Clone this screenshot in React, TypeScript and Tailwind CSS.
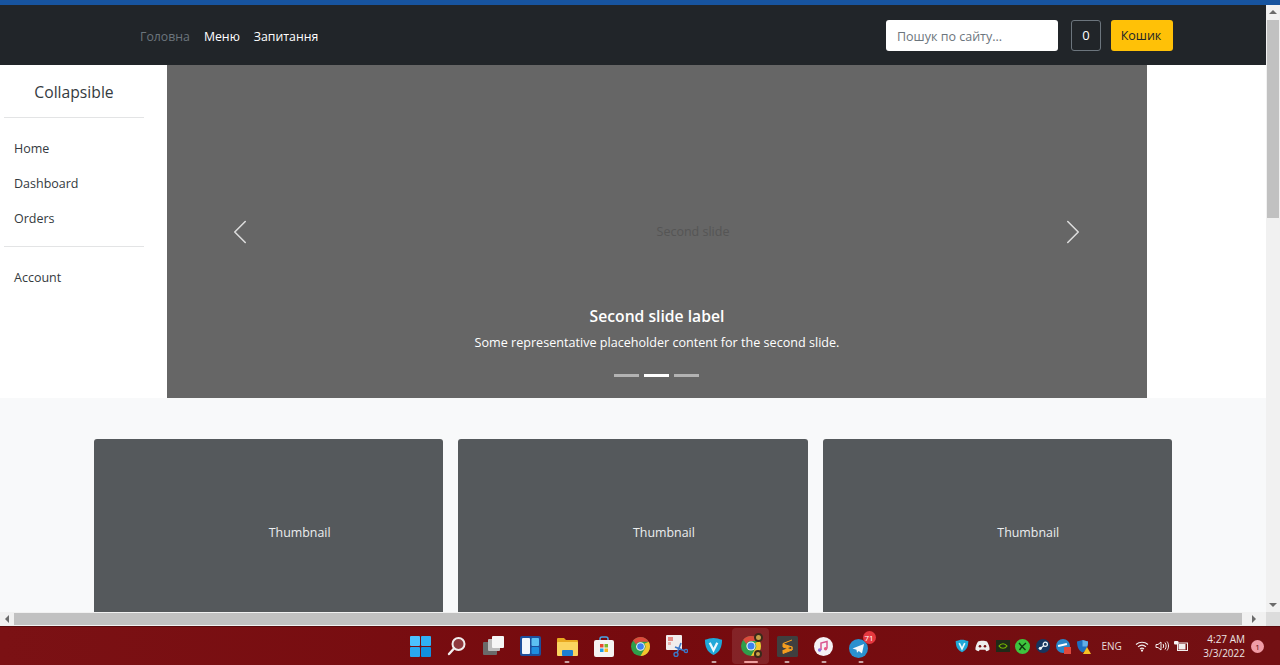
import { ChevronLeft, ChevronRight } from 'lucide-react'
import type { ReactNode } from 'react'

const font = "font-['Open_Sans','Noto_Sans',sans-serif]"

function Arrow({ dir }: { dir: 'up' | 'down' | 'left' | 'right' }) {
  const pts = { up: '0,5 4,1 8,5', down: '0,2 8,2 4,6', left: '6,0 6,8 2,4', right: '2,0 2,8 6,4' }[dir]
  return (
    <svg width="8" height="8" viewBox="0 0 8 8">
      <polygon points={pts} fill="#6b6b6b" />
    </svg>
  )
}

function Slot({ children, active, dot }: { children: ReactNode; active?: boolean; dot?: boolean }) {
  return (
    <div className={`relative w-[36.7px] h-[36px] flex items-center justify-center rounded ${active ? 'bg-white/10' : ''}`}>
      {children}
      {dot && <span className={`absolute bottom-[1px] left-1/2 -translate-x-1/2 h-[2px] rounded-full ${active ? 'w-[14px] bg-[#f0a0a0]' : 'w-[5px] bg-[#c9a5a5]'}`} />}
    </div>
  )
}

function WindowsIcon() {
  return (
    <svg width="21" height="21" viewBox="0 0 21 21">
      <rect x="0" y="0" width="10" height="10" rx="1" fill="#4cc2ff" />
      <rect x="11" y="0" width="10" height="10" rx="1" fill="#2fb0f5" />
      <rect x="0" y="11" width="10" height="10" rx="1" fill="#2aa8f0" />
      <rect x="11" y="11" width="10" height="10" rx="1" fill="#1190e0" />
    </svg>
  )
}

function SearchIcon() {
  return (
    <svg width="20" height="20" viewBox="0 0 20 20">
      <circle cx="11.5" cy="8" r="6" fill="#8f3a3f" stroke="#f2eeee" strokeWidth="2" />
      <line x1="7" y1="12.5" x2="2" y2="18" stroke="#f2eeee" strokeWidth="2.4" strokeLinecap="round" />
    </svg>
  )
}

function TaskViewIcon() {
  return (
    <svg width="21" height="20" viewBox="0 0 21 20">
      <rect x="0" y="6" width="14" height="13" rx="1" fill="#6a6a6a" />
      <rect x="5" y="3" width="12" height="12" rx="1" fill="#bdbdbd" />
      <rect x="9" y="0" width="12" height="12" rx="1" fill="#f6f6f6" />
    </svg>
  )
}

function WidgetsIcon() {
  return (
    <svg width="21" height="20" viewBox="0 0 21 20">
      <rect x="0" y="0" width="21" height="20" rx="2" fill="#1d4f9c" />
      <rect x="2" y="2" width="8" height="16" rx="1" fill="#f2f6fb" />
      <rect x="11.5" y="2" width="7.5" height="8" rx="1" fill="#5cc0f2" />
      <rect x="11.5" y="11" width="7.5" height="7" rx="1" fill="#1f8fe0" />
    </svg>
  )
}

function FolderIcon() {
  return (
    <svg width="21" height="19" viewBox="0 0 21 19">
      <path d="M0 2a1 1 0 0 1 1-1h6l2 2h11a1 1 0 0 1 1 1v3H0z" fill="#e9a920" />
      <rect x="0" y="5" width="21" height="14" rx="1" fill="#fbd45f" />
      <rect x="5" y="13" width="11" height="6" rx="1" fill="#1d7fd1" />
    </svg>
  )
}

function StoreIcon() {
  return (
    <svg width="20" height="21" viewBox="0 0 20 21">
      <path d="M6 5V3a2 2 0 0 1 2-2h4a2 2 0 0 1 2 2v2" fill="none" stroke="#4aa6e8" strokeWidth="1.5" />
      <rect x="0" y="4" width="20" height="17" rx="2" fill="#f5f3f2" />
      <rect x="6" y="8" width="3.5" height="3.5" fill="#e8492f" />
      <rect x="10.5" y="8" width="3.5" height="3.5" fill="#7cb82a" />
      <rect x="6" y="12.5" width="3.5" height="3.5" fill="#1ea1e8" />
      <rect x="10.5" y="12.5" width="3.5" height="3.5" fill="#f8b81c" />
    </svg>
  )
}

function ChromeIcon({ size = 19 }: { size?: number }) {
  return (
    <svg width={size} height={size} viewBox="0 0 20 20">
      <circle cx="10" cy="10" r="10" fill="#2f9e4a" />
      <path d="M10 0a10 10 0 0 1 8.66 5H10a5 5 0 0 0-4.6 3L2.2 3.7A10 10 0 0 1 10 0z" fill="#dd4a3c" />
      <path d="M18.66 5A10 10 0 0 1 10 20l3.8-6.5A5 5 0 0 0 14 7z" fill="#f6c52c" />
      <circle cx="10" cy="10" r="4.6" fill="#f4f4f4" />
      <circle cx="10" cy="10" r="3.5" fill="#3d82ee" />
    </svg>
  )
}

function SnipIcon() {
  return (
    <svg width="22" height="22" viewBox="0 0 22 22">
      <rect x="0" y="0" width="16" height="15" rx="1" fill="#f1ecec" />
      <rect x="2" y="2" width="5" height="4" fill="#e58a84" />
      <rect x="2" y="7" width="3" height="3" fill="#e9b0ac" />
      <line x1="9" y1="12" x2="19" y2="16" stroke="#3b78c9" strokeWidth="1.6" />
      <line x1="15" y1="8" x2="11" y2="18" stroke="#3b78c9" strokeWidth="1.6" />
      <circle cx="10" cy="19.5" r="2" fill="none" stroke="#3b78c9" strokeWidth="1.4" />
      <circle cx="20" cy="16" r="1.6" fill="none" stroke="#3b78c9" strokeWidth="1.4" />
    </svg>
  )
}

function VpnShield({ size = 19 }: { size?: number }) {
  return (
    <svg width={size} height={size} viewBox="0 0 20 20">
      <path d="M1 3c3-1 6-2 9-2s6 1 9 2c0 7-2 13-9 16C3 16 1 10 1 3z" fill="#1fa8d8" />
      <path d="M6 6l4 8 4-8" fill="none" stroke="#e8f8fd" strokeWidth="2.4" />
    </svg>
  )
}

function PumpkinChrome() {
  return (
    <div className="relative w-[24px] h-[24px] flex items-center justify-center">
      <ChromeIcon size={20} />
      <span className="absolute top-[-1px] right-[0px] w-[9px] h-[9px] rounded-full bg-[#c7a24a] border-2 border-[#3a2a1a]" />
      <span className="absolute bottom-[0px] right-[1px] w-[8px] h-[8px] rounded-full bg-[#c7a24a] border-2 border-[#3a2a1a]" />
    </div>
  )
}

function SublimeIcon() {
  return (
    <svg width="21" height="21" viewBox="0 0 21 21">
      <rect width="21" height="21" rx="1.5" fill="#3f3f3f" />
      <path d="M15 4L6 7.5v3.5l9 3v-3L6 8M15 10.5v3.5L6 17.5v-3.5" fill="#f59d1f" stroke="#f59d1f" strokeWidth="1" />
    </svg>
  )
}

function MusicIcon() {
  return (
    <svg width="19" height="19" viewBox="0 0 19 19">
      <circle cx="9.5" cy="9.5" r="9.5" fill="#f5f2f5" />
      <path d="M7 13V6l6-1.5V11.5" fill="none" stroke="#d9568f" strokeWidth="1.5" />
      <circle cx="5.6" cy="13" r="1.7" fill="#8f6fe0" />
      <circle cx="11.6" cy="11.8" r="1.7" fill="#e85a85" />
    </svg>
  )
}

function TelegramIcon() {
  return (
    <div className="relative w-[24px] h-[24px] flex items-end justify-start">
      <svg width="19" height="19" viewBox="0 0 19 19">
        <circle cx="9.5" cy="9.5" r="9.5" fill="#2a90cf" />
        <path d="M3.5 9.5L15 5l-2 9.5-3.3-2.4-1.7 1.7-.5-3z" fill="#f1f8fc" />
      </svg>
      <span className={`absolute top-[-3px] right-[-3px] w-[13px] h-[13px] rounded-full bg-[#e5383f] text-white text-[8px] leading-[13px] text-center ${font}`}>71</span>
    </div>
  )
}

function Tray({ children }: { children: ReactNode }) {
  return <div className="w-[20.2px] h-[20px] flex items-center justify-center">{children}</div>
}

function Taskbar() {
  return (
    <footer className={`h-[39px] shrink-0 flex items-center border-t border-[#5a0a0d] bg-gradient-to-r from-[#7b1114] via-[#760a0e] to-[#731013] ${font}`}>
      <div className="flex items-center ml-[402px]">
        <Slot><WindowsIcon /></Slot>
        <Slot><SearchIcon /></Slot>
        <Slot><TaskViewIcon /></Slot>
        <Slot><WidgetsIcon /></Slot>
        <Slot dot><FolderIcon /></Slot>
        <Slot><StoreIcon /></Slot>
        <Slot><ChromeIcon /></Slot>
        <Slot><SnipIcon /></Slot>
        <Slot dot><VpnShield /></Slot>
        <Slot active dot><PumpkinChrome /></Slot>
        <Slot dot><SublimeIcon /></Slot>
        <Slot dot><MusicIcon /></Slot>
        <Slot dot><TelegramIcon /></Slot>
      </div>
      <div className="ml-auto flex items-center mr-[16px]">
        <Tray><VpnShield size={14} /></Tray>
        <Tray>
          <svg width="15" height="12" viewBox="0 0 15 12">
            <path d="M3 1.5C5 .6 10 .6 12 1.5c1.6 2.4 2.6 5.4 2.6 8-1 1-2.4 1.6-3.4 1.8l-.9-1.5H4.7l-.9 1.5C2.800 11.100 1.400 10.500.4 9.500c0-2.600 1-5.600 2.600-8z" fill="#eeeeee" />
            <circle cx="5" cy="6.200" r="1.300" fill="#7a1013" />
            <circle cx="10" cy="6.200" r="1.300" fill="#7a1013" />
          </svg>
        </Tray>
        <Tray>
          <svg width="14" height="12" viewBox="0 0 14 12">
            <rect width="14" height="12" fill="#1f2a18" />
            <path d="M3 6c2-3 6-3 8 0-2 3-6 3-8 0z" fill="none" stroke="#76b900" strokeWidth="1.200" />
          </svg>
        </Tray>
        <Tray>
          <svg width="15" height="15" viewBox="0 0 15 15">
            <circle cx="7.500" cy="7.500" r="7.500" fill="#3ec43e" />
            <path d="M4 4l3 3.500L4.500 11M11 4L7 7.500l3.500 3.500" fill="none" stroke="#0d3a0d" strokeWidth="1.400" />
          </svg>
        </Tray>
        <Tray>
          <svg width="14" height="14" viewBox="0 0 14 14">
            <circle cx="7" cy="7" r="7" fill="#17355f" />
            <circle cx="9.300" cy="5.300" r="2.100" fill="none" stroke="#f0f4f8" strokeWidth="1.200" />
            <circle cx="4.300" cy="9.300" r="1.600" fill="#f0f4f8" />
            <line x1="4.500" y1="9.200" x2="8" y2="6.500" stroke="#f0f4f8" strokeWidth="1.200" />
          </svg>
        </Tray>
        <Tray>
          <div className="relative w-[14px] h-[14px] rounded-full bg-[#2a86c8]">
            <span className="absolute right-[-1px] bottom-[-1px] w-[7px] h-[7px] bg-[#e0483c]" />
            <span className="absolute left-[2px] top-[5px] w-[9px] h-[2px] bg-white -rotate-12" />
          </div>
        </Tray>
        <Tray>
          <svg width="15" height="15" viewBox="0 0 15 15">
            <path d="M1 2.500L6.500 1 12 2.500c0 5-1.500 9-5.500 11C2.500 11.500 1 7.500 1 2.500z" fill="#1d6fc0" />
            <path d="M6.500 1L12 2.500c0 2-.2 3.500-.7 5H6.500z" fill="#62aee8" />
            <polygon points="11,8 15,15 7,15" fill="#f7c325" />
          </svg>
        </Tray>
        <span className="w-[20px] ml-[8px] text-[10px] leading-none text-[#e6dcdc] text-center">ENG</span>
        <div className="flex items-center ml-[10px]">
          <Tray>
            <svg width="14" height="11" viewBox="0 0 14 11" fill="none" stroke="#f2eeee" strokeWidth="1.100">
              <path d="M1 3.500C4.500.500 9.500.500 13 3.500M3 5.800c2.400-2 5.600-2 8 0M5 8c1.200-1 2.800-1 4 0" />
              <circle cx="7" cy="9.600" r=".6" fill="#f2eeee" />
            </svg>
          </Tray>
          <Tray>
            <svg width="14" height="12" viewBox="0 0 14 12" fill="none" stroke="#f2eeee" strokeWidth="1">
              <path d="M1 4.500v3h2l3 2.500V2L3 4.500z" />
              <path d="M8 4c.8 1.200.8 2.800 0 4M10 2.500c1.500 2 1.500 5 0 7M12 1.500c2 2.500 2 6.500 0 9" />
            </svg>
          </Tray>
          <Tray>
            <svg width="15" height="10" viewBox="0 0 15 10">
              <rect x="3.500" y="2" width="10" height="7.500" fill="none" stroke="#f2eeee" strokeWidth="1" />
              <rect x="4.500" y="3" width="7" height="5.500" fill="#f2eeee" />
              <rect x="0" y="0" width="4.500" height="3.500" rx="1" fill="#f7f3f3" />
            </svg>
          </Tray>
        </div>
        <div className="w-[51px] ml-[2px] flex flex-col items-end text-[10px] leading-[14px] text-[#ece4e4]">
          <span>4:27 AM</span>
          <span>3/3/2022</span>
        </div>
        <span className="ml-[6px] w-[13px] h-[13px] rounded-full bg-[#f09ca6] text-[#5a0a0d] text-[8px] leading-[13px] text-center">1</span>
      </div>
    </footer>
  )
}

const sideTop = ['Home', 'Dashboard', 'Orders']
const slides = [false, true, false]

export default function App() {
  return (
    <div className={`w-[1280px] h-[665px] flex flex-col overflow-hidden bg-white ${font}`}>
      <div className="h-[5px] shrink-0 bg-[#17549f]" />
      <div className="flex-1 flex min-h-0">
        <div className="flex-1 min-w-0 flex flex-col">
          <nav className="h-[60px] shrink-0 bg-[#212529] flex items-center pl-[140px] pr-[93px]">
            <ul className="flex gap-[14px] pt-[4px] text-[12.3px]">
              <li className="text-[#6c757d]">Головна</li>
              <li className="text-white">Меню</li>
              <li className="text-white">Запитання</li>
            </ul>
            <input
              readOnly
              placeholder="Пошук по сайту..."
              className="ml-auto w-[172px] h-[31px] rounded-[3px] bg-white px-[11px] pt-[3px] text-[12.5px] placeholder:text-[#6c757d] outline-none"
            />
            <span className="ml-[13px] w-[30px] h-[31px] flex items-center justify-center rounded-[3px] border border-[#6c757d] text-white text-[13px] pt-[2px]">0</span>
            <button className="ml-[10px] w-[62px] h-[31px] rounded-[3px] bg-[#ffc107] text-[#212529] text-[12.5px] pt-[3px] pr-[2px]">Кошик</button>
          </nav>

          <div className="h-[333px] shrink-0 flex bg-white">
            <aside className="w-[167px] shrink-0 text-[#343a40]">
              <div className="w-[140px] ml-[4px] h-[53px] pt-[3px] flex items-center justify-center border-b border-[#e3e4e5] text-[15.7px]">Collapsible</div>
              <ul className="pt-[14px] text-[12.5px]">
                {sideTop.map((item) => (
                  <li key={item} className="h-[35px] pl-[14px] flex items-center">{item}</li>
                ))}
              </ul>
              <div className="w-[140px] ml-[4px] mt-[9px] border-t border-[#e3e4e5]" />
              <div className="mt-[14px] h-[35px] pl-[14px] flex items-center text-[12.5px]">Account</div>
            </aside>

            <section className="relative w-[980px] shrink-0 bg-[#666666] flex items-center justify-center pl-[72px] pt-[2px]">
              <span className="text-[12.5px] text-[#555555]">Second slide</span>
              <ChevronLeft size={42} strokeWidth={0.9} className="absolute left-[52px] top-[146px] text-[#dddddd]" />
              <ChevronRight size={42} strokeWidth={0.9} className="absolute right-[53px] top-[146px] text-[#dddddd]" />
              <div className="absolute inset-x-0 top-[240px] flex flex-col items-center text-white">
                <h5 className="text-[15.7px] font-semibold leading-[22px]">Second slide label</h5>
                <p className="mt-[6px] text-[12.6px] leading-[20px]">Some representative placeholder content for the second slide.</p>
              </div>
              <div className="absolute inset-x-0 top-[309px] flex justify-center gap-[5px] pr-[2px]">
                {slides.map((on, i) => (
                  <span key={i} className={`w-[25px] h-[3px] ${on ? 'bg-white' : 'bg-white/50'}`} />
                ))}
              </div>
            </section>
          </div>

          <section className="flex-1 min-h-0 overflow-hidden bg-[#f8f9fa] pt-[41px] pl-[94px]">
            <div className="flex gap-[15px]">
              {[0, 1, 2].map((i) => (
                <div key={i} className="w-[349.300px] h-[280px] shrink-0 rounded-[3px] bg-[#55595c] flex items-center justify-center pl-[62px] pb-[91px]">
                  <span className="text-[12.4px] text-[#eceeef]">Thumbnail</span>
                </div>
              ))}
            </div>
          </section>
        </div>

        <div className="w-[14px] shrink-0 bg-[#f1f1f1] flex flex-col items-center">
          <div className="h-[15px] flex items-center justify-center"><Arrow dir="up" /></div>
          <div className="w-[12px] h-[198px] bg-[#c1c1c1]" />
          <div className="flex-1" />
          <div className="h-[15px] flex items-center justify-center"><Arrow dir="down" /></div>
        </div>
      </div>

      <div className="h-[14px] shrink-0 bg-[#f1f1f1] flex items-center">
        <div className="w-[14px] flex justify-center"><Arrow dir="left" /></div>
        <div className="w-[1228px] h-[12px] bg-[#c1c1c1]" />
        <div className="w-[24px] flex justify-center"><Arrow dir="right" /></div>
        <div className="flex-1 h-full bg-[#dcdcdc]" />
      </div>

      <Taskbar />
    </div>
  )
}
